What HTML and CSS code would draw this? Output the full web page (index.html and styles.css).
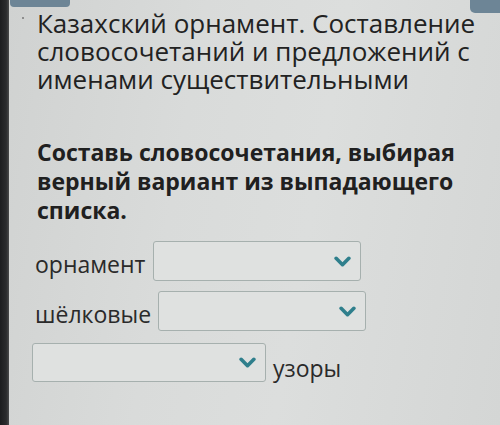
FILE: index.html
```html
<!DOCTYPE html>
<html lang="ru">
<head>
<meta charset="utf-8">
<link rel="stylesheet" href="styles.css">
</head>
<body>
<div class="screen">
  <div class="bezel"></div>
  <div class="page">
    <div class="tab tab-left"></div>
    <div class="tab tab-right"></div>
    <span class="dot"></span>
    <h1 class="title">Казахский орнамент. Составление словосочетаний и предложений с именами существительными</h1>
    <p class="task">Составь словосочетания, выбирая верный вариант из выпадающего списка.</p>
    <div class="rows">
      <div class="row row1">
        <span class="word">орнамент</span>
        <div class="select s1"><svg class="chev" viewBox="0 0 16 10" width="17" height="11"><path d="M2 2 L8 8 L14 2" fill="none" stroke="#2f7f8c" stroke-width="3.4" stroke-linecap="round" stroke-linejoin="round"/></svg></div>
      </div>
      <div class="row row2">
        <span class="word">шёлковые</span>
        <div class="select s2"><svg class="chev" viewBox="0 0 16 10" width="17" height="11"><path d="M2 2 L8 8 L14 2" fill="none" stroke="#2f7f8c" stroke-width="3.4" stroke-linecap="round" stroke-linejoin="round"/></svg></div>
      </div>
      <div class="row row3">
        <div class="select s3"><svg class="chev" viewBox="0 0 16 10" width="17" height="11"><path d="M2 2 L8 8 L14 2" fill="none" stroke="#2f7f8c" stroke-width="3.4" stroke-linecap="round" stroke-linejoin="round"/></svg></div>
        <span class="word word-low">узоры</span>
      </div>
    </div>
  </div>
</div>
</body>
</html>
```
FILE: styles.css
```css
html, body {
  margin: 0;
  padding: 0;
  width: 500px;
  height: 425px;
  overflow: hidden;
}
body {
  font-family: "Open Sans", "Noto Sans", sans-serif;
  color: #262626;
}
.screen {
  display: flex;
  width: 500px;
  height: 425px;
}
.bezel {
  width: 9px;
  flex: none;
  background: linear-gradient(to right, #1c1d1f, #2b2c2e 70%, #4a4b4c);
}
.page {
  position: relative;
  flex: 1;
  padding: 9px 0 0 28px;
  background: linear-gradient(100deg, #d0d2d1 0%, #d9dbda 35%, #dcdedd 60%, #d4d6d5 100%);
}
.tab {
  position: absolute;
  top: 0;
  background: #6d8596;
}
.tab-left {
  left: 1px;
  width: 60px;
  height: 7px;
  border-radius: 0 0 4px 4px;
}
.tab-right {
  right: 0;
  width: 30px;
  height: 13px;
  border-radius: 0 0 0 5px;
}
.dot {
  position: absolute;
  left: 13px;
  top: 17px;
  width: 2px;
  height: 2px;
  background: #777;
  border-radius: 50%;
}
.title {
  margin: 0;
  font-size: 26px;
  font-weight: 400;
  line-height: 28px;
  color: #222;
  width: 450px;
}
.task {
  margin: 45px 0 0;
  font-size: 23px;
  font-weight: 700;
  line-height: 29px;
  color: #202020;
  width: 450px;
}
.rows {
  display: flex;
  flex-direction: column;
  gap: 10px;
  margin-top: 16px;
  margin-left: -2px;
}
.row {
  display: flex;
  align-items: center;
  gap: 8px;
}
.row2 {
  gap: 7px;
}
.row3 {
  margin-left: -3px;
  gap: 7px;
}
.word {
  font-size: 23px;
  line-height: 30px;
  color: #2a2a2a;
  padding-top: 6px;
}
.word-low {
  padding-top: 12px;
}
.select {
  box-sizing: border-box;
  height: 40px;
  border: 1.5px solid #a6b0ae;
  border-radius: 3px;
  background: #dfe1e0;
  display: flex;
  align-items: center;
  justify-content: flex-end;
  padding-right: 9px;
}
.s1 { width: 208px; }
.s2 { width: 208px; }
.s3 { width: 234px; height: 39px; }
.chev {
  display: block;
}
```
